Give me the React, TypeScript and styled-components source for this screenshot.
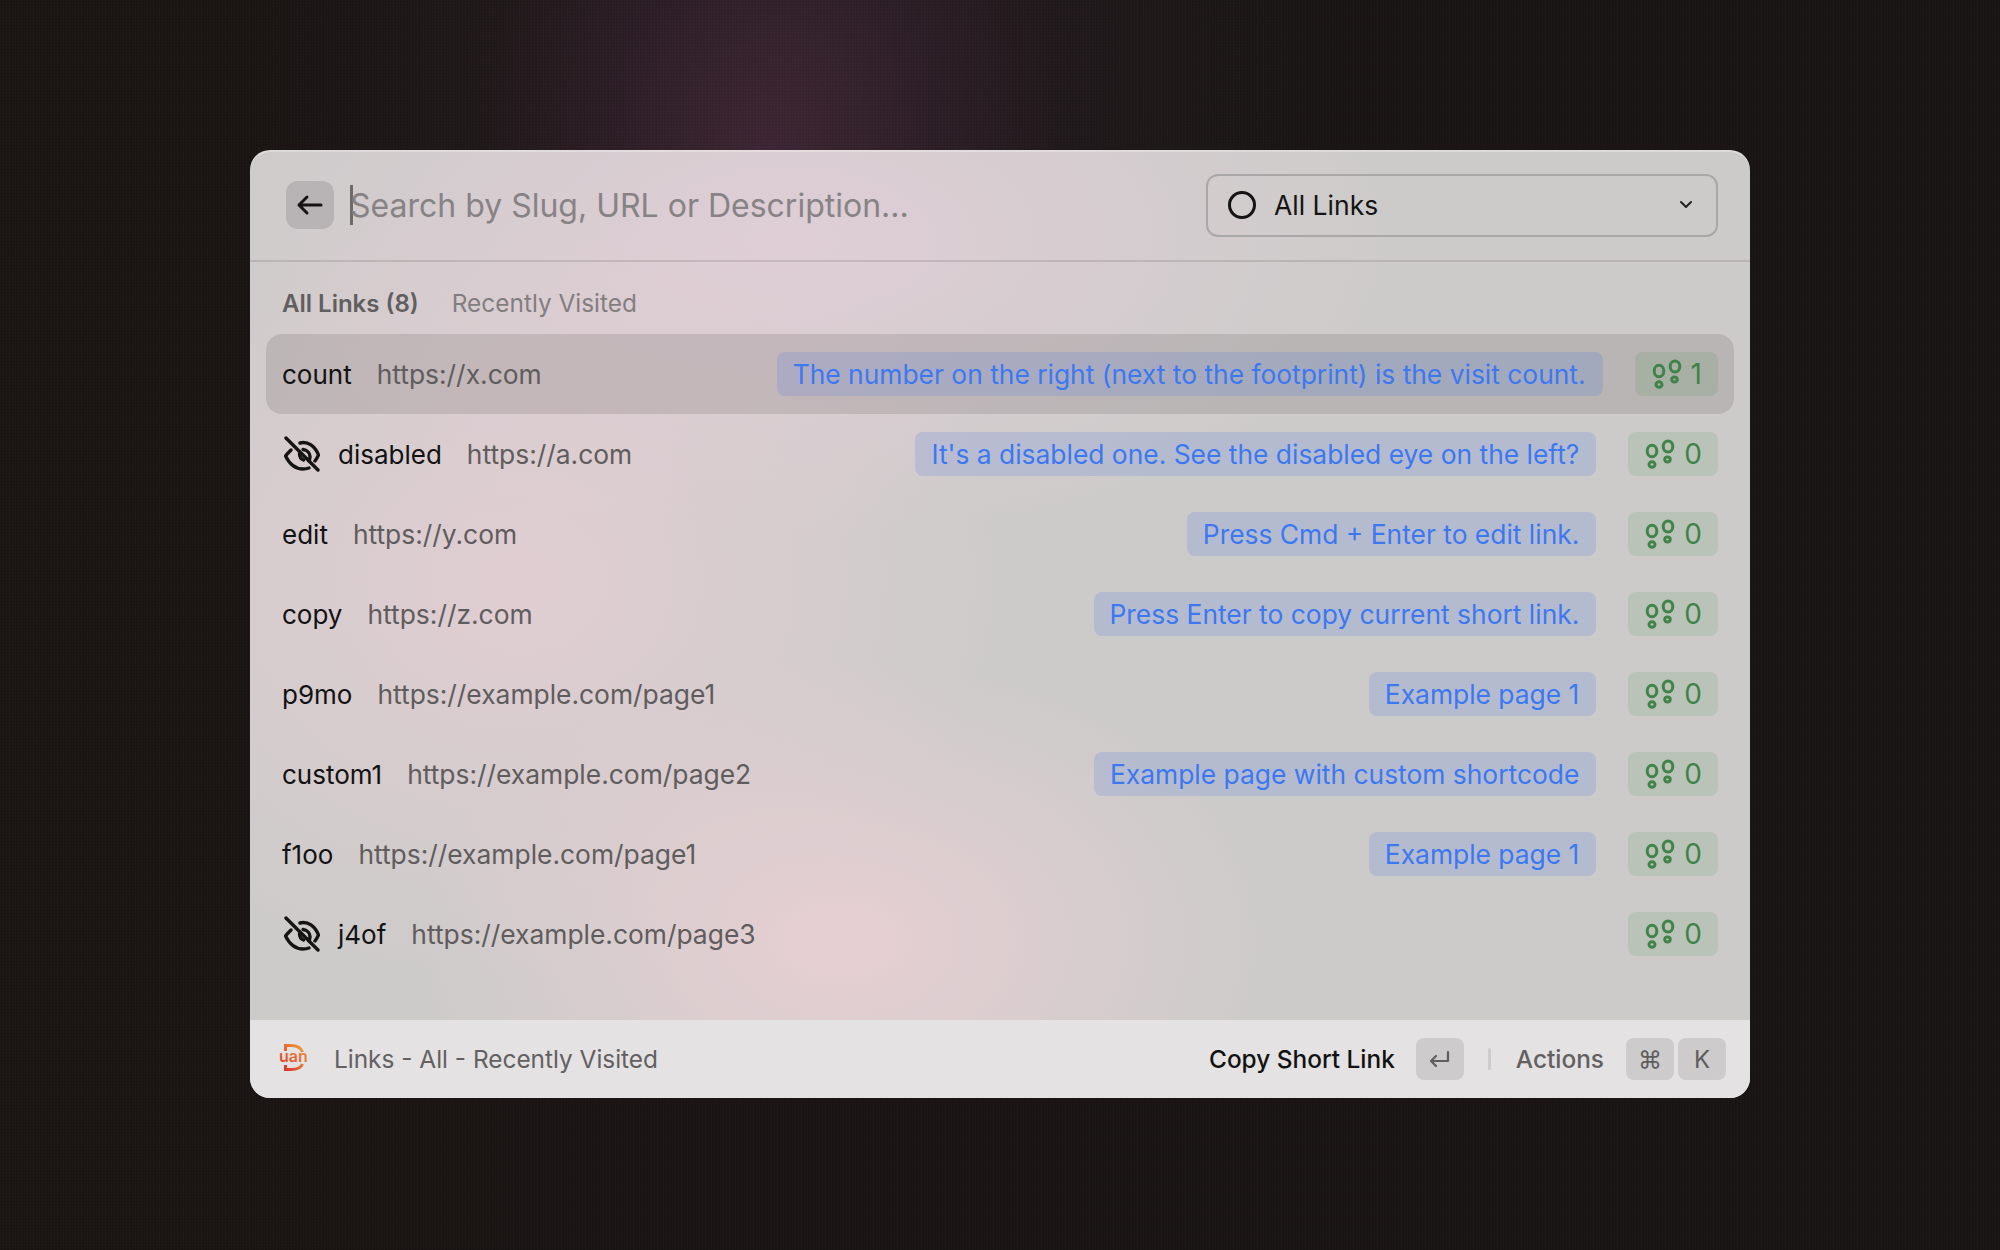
import React from "react";
import styled, { createGlobalStyle } from "styled-components";

const Global = createGlobalStyle`
  html, body { margin: 0; padding: 0; background: #191514; }
  * { box-sizing: border-box; }
`;

const Page = styled.div`
  width: 2000px;
  height: 1250px;
  display: flex;
  justify-content: center;
  padding-top: 150px;
  font-family: Inter, "Liberation Sans", sans-serif;
  background:
    repeating-linear-gradient(90deg, rgba(255, 255, 255, 0.01) 0 1px, transparent 1px 3px),
    repeating-linear-gradient(0deg, rgba(0, 0, 0, 0.06) 0 1px, transparent 1px 3px),
    radial-gradient(ellipse 290px 340px at 770px 150px, rgba(72, 42, 60, 0.72), rgba(60, 36, 50, 0.4) 55%, transparent 100%),
    radial-gradient(ellipse 540px 480px at 800px 60px, rgba(50, 36, 46, 0.6), transparent 100%),
    linear-gradient(90deg, #1b1513, #1a1514 45%, #191514);
`;

const Panel = styled.main`
  width: 1500px;
  height: 948px;
  border-radius: 20px;
  overflow: hidden;
  display: flex;
  flex-direction: column;
  box-shadow: inset 0 2px 0 rgba(255, 255, 255, 0.3);
  background:
    radial-gradient(ellipse 420px 280px at 590px 790px, rgba(232, 207, 211, 0.95), transparent 100%),
    radial-gradient(ellipse 480px 400px at 270px 430px, rgba(228, 206, 212, 0.85), transparent 100%),
    radial-gradient(ellipse 600px 300px at 540px 90px, rgba(223, 206, 214, 1), transparent 100%),
    #cdcbca;
`;

const Header = styled.header`
  height: 112px;
  flex: none;
  display: flex;
  align-items: center;
  padding: 0 32px 0 36px;
  border-bottom: 2px solid rgba(120, 112, 114, 0.24);
`;

const BackButton = styled.button`
  width: 48px;
  height: 48px;
  flex: none;
  padding: 0;
  border: 0;
  border-radius: 12px;
  background: rgba(110, 104, 106, 0.25);
  color: #151313;
  display: flex;
  align-items: center;
  justify-content: center;
`;

const Caret = styled.span`
  width: 3px;
  height: 40px;
  margin: 0 -3px 0 16px;
  flex: none;
  background: #6d6a6c;
`;

const Placeholder = styled.div`
  flex: 1;
  font-size: 32px;
  color: #878385;
`;

const Select = styled.div`
  width: 512px;
  height: 63px;
  flex: none;
  display: flex;
  align-items: center;
  padding: 0 23px 0 20px;
  border: 2px solid #a9a7a7;
  border-radius: 12px;
  color: #151313;
  font-size: 26.5px;
`;

const Ring = styled.span`
  width: 28px;
  height: 28px;
  flex: none;
  margin-right: 18px;
  border: 3px solid #151313;
  border-radius: 50%;
`;

const SelectLabel = styled.span`
  flex: 1;
`;

const Body = styled.section`
  flex: 1;
  padding: 0 16px;
`;

const Tabs = styled.div`
  height: 72px;
  display: flex;
  align-items: center;
  gap: 33px;
  padding: 10px 16px 0;
`;

const Tab = styled.span<{ $active?: boolean }>`
  color: ${(p) => (p.$active ? "#605e5f" : "#827e80")};
  font-weight: ${(p) => (p.$active ? 600 : 400)};
  font-size: ${(p) => (p.$active ? "24px" : "24.4px")};
`;

const Row = styled.div<{ $selected?: boolean }>`
  height: 80px;
  display: flex;
  align-items: center;
  padding: 0 16px;
  border-radius: 16px;
  font-size: 26px;
  background: ${(p) => (p.$selected ? "rgba(60, 50, 52, 0.14)" : "transparent")};
`;

const EyeBox = styled.span`
  width: 36px;
  height: 36px;
  margin: -1px 18px 0 2px;
  flex: none;
  color: #151313;
`;

const Slug = styled.span`
  color: #131212;
  margin-right: 25px;
`;

const Url = styled.span`
  flex: 1;
  font-size: 26.4px;
  color: #5f5c5d;
`;

const Desc = styled.span`
  height: 44px;
  display: flex;
  align-items: center;
  padding: 0 17px 0 16px;
  margin-right: 32px;
  border-radius: 8px;
  font-size: 26.4px;
  color: #3b78f2;
  background: rgba(70, 115, 230, 0.18);
`;

const Count = styled.span`
  height: 44px;
  display: flex;
  align-items: center;
  gap: 8px;
  padding: 0 16px;
  border-radius: 8px;
  font-size: 28px;
  color: #3f8348;
  background: rgba(70, 150, 80, 0.14);
`;

const Footer = styled.footer`
  height: 78px;
  flex: none;
  display: flex;
  align-items: center;
  padding: 0 24px 0 29px;
  background: #e4e2e3;
  font-size: 24.4px;
`;

const LogoText = styled.text`
  font-family: Inter, "Liberation Sans", sans-serif;
  font-size: 16px;
  font-weight: 600;
`;

const Breadcrumb = styled.span`
  flex: 1;
  margin-left: 25px;
  color: #626061;
`;

const PrimaryAction = styled.span`
  color: #131212;
  font-weight: 500;
  margin-right: 21px;
`;

const Key = styled.kbd<{ $last?: boolean }>`
  width: 48px;
  height: 42px;
  display: flex;
  align-items: center;
  justify-content: center;
  margin-left: ${(p) => (p.$last ? "4px" : "0")};
  border-radius: 8px;
  background: #cdcbcc;
  color: #5f5d5e;
  font-family: Inter, "DejaVu Sans", sans-serif;
  font-size: 24px;
`;

const Divider = styled.span`
  width: 3px;
  height: 22px;
  margin: 0 25px 0 24px;
  border-radius: 2px;
  background: #cdcbcc;
`;

const SecondaryAction = styled.span`
  color: #626061;
  font-weight: 500;
  margin-right: 22px;
`;

const ArrowLeft = () => (
  <svg width="28" height="28" viewBox="0 0 28 28" fill="none" stroke="currentColor" strokeWidth="3" strokeLinecap="round" strokeLinejoin="round">
    <path d="M3 14h22M11 6l-8 8 8 8" />
  </svg>
);

const Chevron = () => (
  <svg width="14" height="10" viewBox="0 0 14 10" fill="none" stroke="#222" strokeWidth="2" strokeLinecap="round" strokeLinejoin="round">
    <path d="M2 2l5 5 5-5" />
  </svg>
);

const EyeOff = () => (
  <svg width="36" height="36" viewBox="0 0 36 36" fill="none" stroke="currentColor" strokeWidth="3.4" strokeLinecap="round" strokeLinejoin="round">
    <path d="M2 2l32 32" />
    <path d="M16 7c8-2 15 3 18.5 12-.8 2-2 4-3.5 6" />
    <path d="M7 14c-2 2-4 4-5.5 6C5.5 28 12 33 19 33c2 0 4-.3 6-1" />
    <path d="M19 13.5c4 .5 7 3.5 7 7 0 1.5-.3 3-1 4.5" />
    <path d="M15.5 17.5c0 3 1.5 5.5 4 6.5" />
  </svg>
);

const Foot = () => (
  <svg width="32" height="32" viewBox="0 0 32 32" fill="none" stroke="currentColor" strokeWidth="3">
    <ellipse cx="8" cy="13" rx="4.8" ry="5.8" />
    <ellipse cx="8" cy="26.5" rx="3" ry="2.8" />
    <ellipse cx="24" cy="8.5" rx="4.8" ry="5.6" />
    <ellipse cx="23.5" cy="21.5" rx="2.8" ry="2.6" />
  </svg>
);

const ReturnIcon = () => (
  <svg width="22" height="18" viewBox="0 0 22 18" fill="none" stroke="currentColor" strokeWidth="2.2" strokeLinecap="round" strokeLinejoin="round">
    <path d="M19 2v9H2M7 6l-5 5 5 5" />
  </svg>
);

const Logo = () => (
  <svg width="30" height="30" viewBox="0 0 30 30" fill="none">
    <defs>
      <linearGradient id="duan" x1="0" y1="1" x2="1" y2="0">
        <stop offset="0" stopColor="#d8392b" />
        <stop offset="1" stopColor="#f0a03c" />
      </linearGradient>
    </defs>
    <path d="M6.5 7V1.500H12c6 0 10 2.500 11.500 6.500M23.500 20c-1.500 4-5.500 5.500-11.500 5.500H6.500V21" stroke="url(#duan)" strokeWidth="3" />
    <LogoText x="0" y="18" fill="url(#duan)">uan</LogoText>
  </svg>
);

const links = [
  { slug: "count", url: "https://x.com", desc: "The number on the right (next to the footprint) is the visit count.", count: 1, selected: true },
  { slug: "disabled", url: "https://a.com", desc: "It's a disabled one. See the disabled eye on the left?", count: 0, off: true },
  { slug: "edit", url: "https://y.com", desc: "Press Cmd + Enter to edit link.", count: 0 },
  { slug: "copy", url: "https://z.com", desc: "Press Enter to copy current short link.", count: 0 },
  { slug: "p9mo", url: "https://example.com/page1", desc: "Example page 1", count: 0 },
  { slug: "custom1", url: "https://example.com/page2", desc: "Example page with custom shortcode", count: 0 },
  { slug: "f1oo", url: "https://example.com/page1", desc: "Example page 1", count: 0 },
  { slug: "j4of", url: "https://example.com/page3", desc: "", count: 0, off: true },
];

export default function App() {
  return (
    <Page>
      <Global />
      <Panel>
        <Header>
          <BackButton><ArrowLeft /></BackButton>
          <Caret />
          <Placeholder>Search by Slug, URL or Description...</Placeholder>
          <Select>
            <Ring />
            <SelectLabel>All Links</SelectLabel>
            <Chevron />
          </Select>
        </Header>
        <Body>
          <Tabs>
            <Tab $active>All Links (8)</Tab>
            <Tab>Recently Visited</Tab>
          </Tabs>
          {links.map((l) => (
            <Row key={l.slug} $selected={l.selected}>
              {l.off && <EyeBox><EyeOff /></EyeBox>}
              <Slug>{l.slug}</Slug>
              <Url>{l.url}</Url>
              {l.desc && <Desc>{l.desc}</Desc>}
              <Count><Foot />{l.count}</Count>
            </Row>
          ))}
        </Body>
        <Footer>
          <Logo />
          <Breadcrumb>Links - All - Recently Visited</Breadcrumb>
          <PrimaryAction>Copy Short Link</PrimaryAction>
          <Key><ReturnIcon /></Key>
          <Divider />
          <SecondaryAction>Actions</SecondaryAction>
          <Key>⌘</Key>
          <Key $last>K</Key>
        </Footer>
      </Panel>
    </Page>
  );
}
